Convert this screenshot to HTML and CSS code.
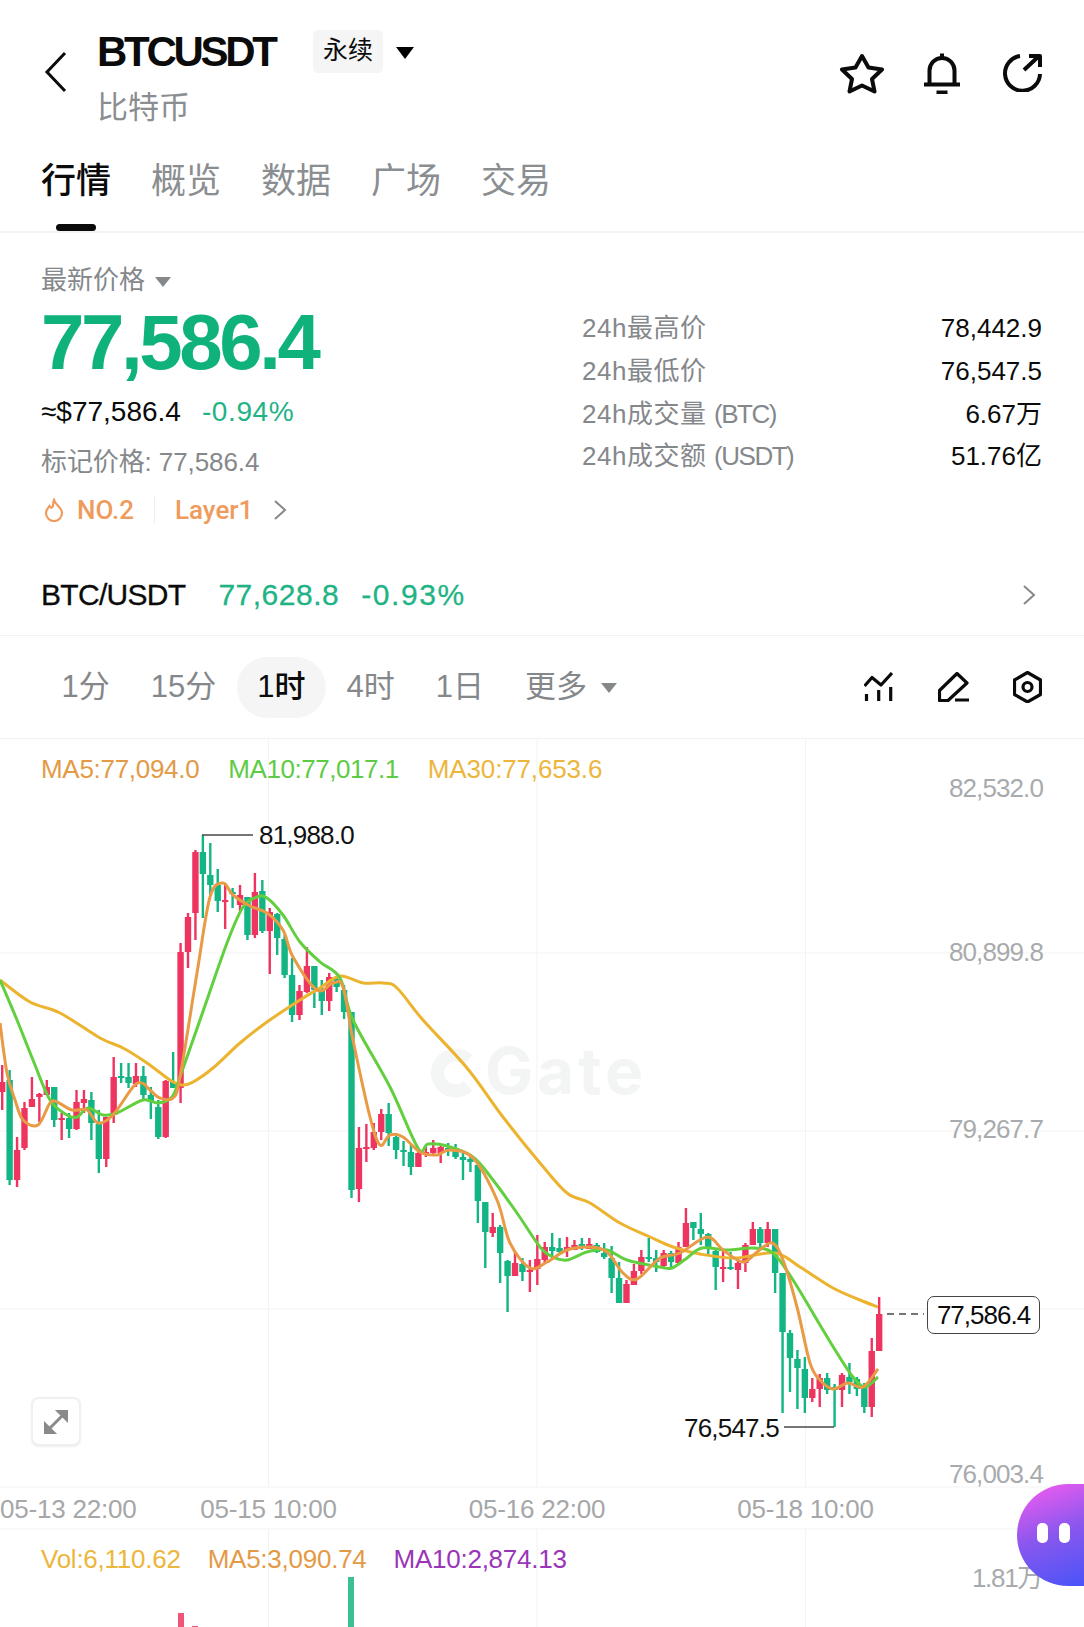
FILE: index.html
```html
<!DOCTYPE html>
<html lang="zh-CN">
<head>
  <meta charset="UTF-8" />
  <meta name="viewport" content="width=device-width, initial-scale=1.0" />
  <title>BTCUSDT</title>
  <link rel="stylesheet" href="styles.css">
</head>
<body>
  <header class="top">
    <svg class="back" width="24" height="42" viewBox="0 0 24 42"><polyline points="21,2 3,21 21,40" /></svg>
    <div class="title-block">
      <div class="title-row">
        <h1 class="symbol">BTCUSDT</h1>
        <span class="tag">永续</span>
        <span class="caret caret-black"></span>
      </div>
      <div class="coin-name">比特币</div>
    </div>
    <div class="top-icons">
      <svg class="icon star" width="46" height="41" viewBox="0 0 46 41"><polygon points="23,3 29.500,14.500 43,16.500 33,26 35.500,38.500 23,32.500 10.500,38.500 13,26 3,16.500 16.500,14.500" /></svg>
      <svg class="icon" width="36" height="41" viewBox="0 0 36 41"><path d="M18 0.500V4M5.500 30V17.500a12.500 12.500 0 0 1 25 0V30M0 31.500H36M12.500 39.500H23.500" /></svg>
      <svg class="icon" width="40" height="39" viewBox="0 0 40 39"><path d="M17 3A17.500 17.500 0 1 0 37 21M21 17L36 3M26 3H37V14" /></svg>
    </div>
  </header>

  <nav class="tabs">
    <a class="tab active">行情</a>
    <a class="tab">概览</a>
    <a class="tab">数据</a>
    <a class="tab">广场</a>
    <a class="tab">交易</a>
  </nav>

  <section class="summary">
    <div class="summary-left">
      <div class="price-label">最新价格<span class="caret caret-grey"></span></div>
      <div class="last-price">77,586.4</div>
      <div class="usd-line"><span class="usd">≈$77,586.4</span><span class="change">-0.94%</span></div>
      <div class="mark-price">标记价格: 77,586.4</div>
      <div class="rank-line">
        <svg class="flame" width="20" height="24" viewBox="0 0 20 24"><path d="M10 2C11 7 18 9 18 15a8 8 0 0 1-16 0C2 12 4 10 5.500 8C6.500 10 8 10 8.500 9C9.500 7 9 4 10 2Z" /></svg>
        <span class="rank">NO.2</span>
        <span class="rank-sep"></span>
        <span class="rank">Layer1</span>
        <svg class="rank-arrow" width="14" height="22" viewBox="0 0 14 22"><polyline points="2,2 12,11 2,20" /></svg>
      </div>
    </div>
    <dl class="stats">
      <div class="stat"><dt>24h最高价</dt><dd>78,442.9</dd></div>
      <div class="stat"><dt>24h最低价</dt><dd>76,547.5</dd></div>
      <div class="stat"><dt>24h成交量 <span class="unit">(BTC)</span></dt><dd>6.67万</dd></div>
      <div class="stat"><dt>24h成交额 <span class="unit">(USDT)</span></dt><dd>51.76亿</dd></div>
    </dl>
  </section>

  <section class="pair">
    <span class="pair-name">BTC/USDT</span>
    <span class="pair-price">77,628.8</span>
    <span class="pair-change">-0.93%</span>
    <svg class="pair-arrow" width="14" height="22" viewBox="0 0 14 22"><polyline points="2,2 12,11 2,20" /></svg>
  </section>

  <section class="timeframes">
    <a class="tf">1分</a>
    <a class="tf">15分</a>
    <a class="tf active">1时</a>
    <a class="tf">4时</a>
    <a class="tf">1日</a>
    <a class="tf">更多<span class="caret caret-grey"></span></a>
    <div class="tool-icons">
      <svg class="tool" width="29" height="30" viewBox="0 0 29 30"><path d="M0.500 14L8 5.500L17 13L28 1M2.500 22V29M14.700 18V29M26.700 15V29" /></svg>
      <svg class="tool pencil" width="32" height="30" viewBox="0 0 32 30"><path d="M19 1.500L29 11L10 28.500H1.500V18.500ZM17 28H31" /></svg>
      <svg class="tool" width="29" height="32" viewBox="0 0 29 32"><path d="M14.500 1.500L27.500 9V23.500L14.500 31L1.500 23.500V9Z" /><circle cx="14.500" cy="16" r="4.500" /></svg>
    </div>
  </section>

  <section class="chart">
    <svg class="plot" width="1084" height="888" viewBox="0 739 1084 888">
      <g class="grid">
        <path d="M0 953H1084M0 1131H1084M0 1309H1084M0 1487H1084M0 1529H1084" />
        <path d="M268.500 739V1487M537 739V1487M805.500 739V1487M268.500 1529V1627M537 1529V1627M805.500 1529V1627" />
      </g>
      <g class="watermark">
        <path d="M468 1060A18 18 0 1 0 468 1086" />
        <text x="485" y="1094">Gate</text>
      </g>
      <g id="candles"></g>
      <g id="ma-lines"></g>
      <g class="marks">
        <path d="M202 835H253M784 1427H834" />
        <path class="dash" d="M887 1314H924" />
      </g>
      <text class="mark-text" x="259" y="844">81,988.0</text>
      <text class="mark-text" x="684" y="1437">76,547.5</text>
      <g class="y-axis">
        <text x="1043" y="797">82,532.0</text>
        <text x="1043" y="961">80,899.8</text>
        <text x="1043" y="1138">79,267.7</text>
        <text x="1043" y="1483">76,003.4</text>
        <text class="vol-max" x="1042" y="1587">1.81万</text>
      </g>
      <g class="x-axis">
        <text x="0" y="1518">05-13 22:00</text>
        <text class="mid" x="268.500" y="1518">05-15 10:00</text>
        <text class="mid" x="537" y="1518">05-16 22:00</text>
        <text class="mid" x="805.500" y="1518">05-18 10:00</text>
      </g>
      <g class="vol-bars">
        <rect class="up" x="178" y="1613" width="6" height="14" />
        <rect class="up" x="192" y="1626" width="6" height="1" />
        <rect class="down" x="348" y="1577" width="6" height="50" />
      </g>
    </svg>

    <div class="legend legend-main">
      <span class="c-ma5">MA5:77,094.0</span>
      <span class="c-ma10">MA10:77,017.1</span>
      <span class="c-ma30">MA30:77,653.6</span>
    </div>
    <div class="legend legend-vol">
      <span class="c-ma30">Vol:6,110.62</span>
      <span class="c-ma5">MA5:3,090.74</span>
      <span class="c-purple">MA10:2,874.13</span>
    </div>

    <div class="last-box">77,586.4</div>
    <button class="expand">
      <svg width="24" height="24" viewBox="0 0 24 24"><path d="M13 0H24V11ZM0 13V24H11ZM18 6L12 12M6 18L12 12" /></svg>
    </button>
    <div class="bubble"><span class="eye"></span><span class="eye"></span></div>
  </section>

  <script src="chart.js"></script>
</body>
</html>
```

FILE: styles.css
```css
* {
  box-sizing: border-box;
}

html, body {
  margin: 0;
  height: 1627px;
  overflow: hidden;
}

body {
  width: 1084px;
  background: #fff;
  color: #0b0b0b;
  font-family: "Liberation Sans", "Noto Sans CJK SC", sans-serif;
}

.caret {
  display: inline-block;
  width: 0;
  height: 0;
  border-left: 8px solid transparent;
  border-right: 8px solid transparent;
}

.caret-black {
  border-left-width: 9px;
  border-right-width: 9px;
  border-top: 12px solid #000;
  margin-left: 13px;
  margin-top: 3px;
}

.caret-grey {
  border-top: 10px solid #85888b;
  margin-left: 10px;
  vertical-align: middle;
}

/* header */
.top {
  display: flex;
  height: 135px;
  padding: 30px 41px 0 44px;
}

.back {
  margin-top: 21px;
  flex: none;
}

.back polyline, .rank-arrow polyline, .pair-arrow polyline {
  fill: none;
  stroke: #0b0b0b;
  stroke-width: 3;
}

.title-block {
  margin-left: 29px;
}

.title-row {
  display: flex;
  align-items: center;
  height: 42px;
}

.symbol {
  margin: 2px 0 0;
  font-size: 42px;
  line-height: 42px;
  letter-spacing: -3.300px;
  font-weight: 700;
  width: 216px;
}

.tag {
  width: 70px;
  height: 43px;
  line-height: 41px;
  text-align: center;
  font-size: 25px;
  background: #f5f5f5;
  border-radius: 5px;
}

.coin-name {
  margin-top: 16px;
  font-size: 31px;
  line-height: 40px;
  color: #8b8e91;
}

.top-icons {
  margin-left: auto;
  display: flex;
  align-items: flex-start;
  gap: 43px;
  padding-top: 23px;
}

.star {
  margin-right: -4px;
}

.icon {
  fill: none;
  stroke: #0b0b0b;
  stroke-width: 4;
  stroke-linejoin: round;
}

/* tabs */
.tabs {
  position: relative;
  display: flex;
  gap: 41px;
  height: 98px;
  padding: 22px 0 0 41px;
  border-bottom: 2px solid #f3f3f3;
}

.tab {
  width: 69px;
  font-size: 35px;
  line-height: 48px;
  white-space: nowrap;
  color: #8b8e91;
}

.tab.active {
  color: #0b0b0b;
  font-weight: 500;
}

.tab.active::after {
  content: "";
  position: absolute;
  left: 56px;
  bottom: 0;
  width: 40px;
  height: 7px;
  border-radius: 4px;
  background: #0b0b0b;
}

/* price summary */
.summary {
  display: flex;
  height: 292px;
  padding-left: 41px;
}

.summary-left {
  flex: none;
  width: 541px;
  padding-top: 32px;
}

.price-label {
  font-size: 26px;
  line-height: 30px;
  color: #85888b;
}

.last-price {
  margin-top: 12px;
  font-size: 78px;
  line-height: 70px;
  font-weight: 700;
  letter-spacing: -3.400px;
  color: #10b27c;
}

.usd-line {
  display: flex;
  gap: 21px;
  margin-top: 18px;
  font-size: 28px;
  line-height: 34px;
}

.change {
  color: #1fb386;
  letter-spacing: 0.600px;
}

.mark-price {
  margin-top: 16px;
  font-size: 26px;
  line-height: 34px;
  letter-spacing: -0.100px;
  color: #85888b;
}

.rank-line {
  display: flex;
  align-items: center;
  height: 30px;
  margin-top: 16px;
  padding-left: 3px;
  color: #ef9b5d;
}

.flame {
  fill: none;
  stroke: #ef9b5d;
  stroke-width: 2.200;
}

.rank {
  font-family: Roboto, "Liberation Sans", sans-serif;
  font-size: 26px;
  font-weight: 500;
  margin-left: 13px;
}

.rank-sep {
  width: 1px;
  height: 26px;
  margin-left: 20px;
  margin-right: 7px;
  background: #f1eeea;
}

.rank-arrow {
  margin-left: 20px;
}

.rank-arrow polyline, .pair-arrow polyline {
  stroke: #85888b;
  stroke-width: 2;
}

.stats {
  flex: 1;
  margin: 0;
  padding: 74px 42px 0 0;
}

.stat {
  display: flex;
  justify-content: space-between;
  height: 42.800px;
  line-height: 42px;
  font-size: 26px;
}

.stat dt {
  color: #85888b;
  letter-spacing: 0.500px;
}

.stat .unit {
  letter-spacing: -1.500px;
}

.stat dd {
  margin: 0;
}

/* pair row */
.pair {
  display: flex;
  align-items: center;
  height: 111px;
  padding: 30px 48px 0 41px;
  border-bottom: 1px solid #f2f2f2;
  font-size: 30px;
  -webkit-text-stroke: 0.300px;
}

.pair-name {
  letter-spacing: -0.700px;
}

.pair-price {
  margin-left: 33px;
  letter-spacing: 0.500px;
  color: #1fb386;
}

.pair-change {
  margin-left: 22px;
  letter-spacing: 1.600px;
  color: #1fb386;
}

.pair-arrow {
  margin-left: auto;
  -webkit-text-stroke: 0;
}

/* timeframes */
.timeframes {
  display: flex;
  align-items: center;
  height: 103px;
  padding: 0 42px 0 41px;
  border-bottom: 1px solid #f2f2f2;
}

.tf {
  height: 61px;
  line-height: 59px;
  padding: 0 20.500px;
  font-size: 31px;
  color: #85888b;
  white-space: nowrap;
}

.tf .caret {
  margin-left: 14px;
}

.tf.active {
  background: #f5f5f5;
  border-radius: 31px;
  color: #0b0b0b;
  font-weight: 500;
}

.tool-icons {
  margin-left: auto;
  display: flex;
  align-items: center;
  gap: 44px;
}

.tool {
  fill: none;
  stroke: #0b0b0b;
  stroke-width: 3.200;
  stroke-linejoin: round;
}

.pencil {
  margin-left: 1px;
  margin-right: -1px;
}

/* chart */
.chart {
  position: relative;
  height: 888px;
}

.plot {
  position: absolute;
  left: 0;
  top: 0;
}

.grid path {
  fill: none;
  stroke: #f3f3f3;
  stroke-width: 1;
}

.watermark path {
  fill: none;
  stroke: #f4f5f5;
  stroke-width: 13;
}

.watermark text {
  font-size: 64px;
  font-weight: 700;
  letter-spacing: 4px;
  fill: #f3f4f4;
  font-family: Inter, "Liberation Sans", sans-serif;
}

.marks path {
  fill: none;
  stroke: #4a4a4a;
  stroke-width: 1.500;
}

.marks .dash {
  stroke-dasharray: 7 5;
}

.mark-text {
  font-size: 26px;
  letter-spacing: -0.800px;
  fill: #111;
}

.y-axis text {
  font-size: 26px;
  letter-spacing: -0.900px;
  fill: #a8abad;
  text-anchor: end;
}

.y-axis .vol-max {
  letter-spacing: -1.300px;
}

.x-axis text {
  font-size: 26px;
  letter-spacing: -0.200px;
  fill: #a5a7a9;
}

.x-axis .mid {
  text-anchor: middle;
}

.vol-bars .up {
  fill: #ee5577;
}

.vol-bars .down {
  fill: #3cbf94;
}

.legend {
  position: relative;
  display: flex;
  font-size: 26px;
  line-height: 30px;
  letter-spacing: -0.300px;
  padding-left: 41px;
}

.legend-main {
  gap: 29px;
  padding-top: 15px;
}

.legend-main .c-ma10 {
  letter-spacing: -0.450px;
}

.legend-main .c-ma30 {
  letter-spacing: -0.150px;
}

.legend-vol {
  gap: 27px;
  margin-top: 760px;
  letter-spacing: -0.250px;
}

.c-ma5 {
  color: #e39a46;
}

.c-ma10 {
  color: #5dcc44;
}

.c-ma30 {
  color: #ecb63c;
}

.c-purple {
  color: #9a35b8;
}

.last-box {
  position: absolute;
  left: 927px;
  top: 557px;
  width: 113px;
  height: 38px;
  line-height: 36px;
  text-align: center;
  font-size: 26px;
  letter-spacing: -1px;
  border: 1.500px solid #444;
  border-radius: 7px;
  background: #fff;
}

.expand {
  position: absolute;
  left: 31px;
  top: 658px;
  width: 50px;
  height: 49px;
  padding: 0;
  display: flex;
  align-items: center;
  justify-content: center;
  background: #fff;
  border: 2px solid #f0f0f0;
  border-radius: 8px;
  box-shadow: 0 1px 2px #eee;
}

.expand path {
  fill: #8a8a8a;
  stroke: #8a8a8a;
  stroke-width: 3;
}

.bubble {
  position: absolute;
  right: 0;
  top: 745px;
  width: 67px;
  height: 102px;
  padding: 39px 0 0 20px;
  display: flex;
  gap: 11px;
  border-radius: 51px 0 0 51px;
  background: linear-gradient(160deg, #fb5cf0 0%, #8a57ee 50%, #4a54f8 100%);
}

.eye {
  width: 11px;
  height: 20px;
  border-radius: 5px;
  background: #fff;
}
```

FILE: chart.js
```js
// wick top, body top, body bottom, wick bottom, colour (page px)
const candles = [
  [1065,1082,1092,1110,'r'],[1070,1080,1180,1185,'g'],[1137,1150,1180,1187,'r'],[1102,1108,1148,1150,'r'],
  [1077,1099,1107,1107,'r'],[1093,1094,1097,1122,'r'],[1080,1087,1095,1095,'r'],[1087,1087,1120,1127,'g'],
  [1113,1118,1120,1140,'r'],[1113,1118,1129,1138,'g'],[1090,1102,1129,1130,'r'],[1090,1099,1103,1113,'r'],
  [1092,1100,1123,1140,'g'],[1110,1124,1159,1173,'g'],[1117,1117,1159,1167,'r'],[1057,1077,1115,1123,'r'],
  [1063,1076,1078,1083,'g'],[1063,1077,1083,1088,'g'],[1063,1076,1084,1087,'r'],[1066,1076,1095,1100,'g'],
  [1087,1095,1102,1119,'g'],[1100,1107,1137,1139,'g'],[1080,1081,1137,1138,'r'],[1052,1082,1088,1088,'g'],
  [943,952,1088,1103,'r'],[913,917,952,968,'r'],[850,852,913,940,'r'],[835,852,874,918,'g'],
  [843,875,885,895,'g'],[869,885,901,912,'g'],[883,900,902,929,'r'],[888,892,894,908,'g'],
  [885,895,905,911,'r'],[897,897,935,940,'g'],[873,892,935,938,'r'],[880,891,931,933,'g'],
  [908,912,931,974,'r'],[913,914,938,955,'g'],[935,939,975,978,'g'],[958,975,1015,1022,'g'],
  [985,991,1015,1020,'r'],[947,966,992,993,'r'],[966,966,990,1008,'g'],[980,990,1001,1015,'g'],
  [973,977,1001,1011,'r'],[977,979,987,992,'g'],[985,990,1012,1019,'g'],[1012,1012,1190,1198,'g'],
  [1127,1148,1189,1202,'r'],[1124,1147,1149,1162,'r'],[1123,1132,1148,1150,'r'],[1109,1114,1132,1140,'r'],
  [1103,1114,1133,1146,'g'],[1133,1137,1150,1159,'g'],[1141,1150,1152,1166,'g'],[1145,1152,1167,1175,'g'],
  [1152,1153,1167,1167,'r'],[1147,1152,1154,1157,'r'],[1140,1148,1153,1154,'r'],[1145,1147,1153,1163,'r'],
  [1143,1148,1151,1156,'g'],[1144,1148,1157,1159,'g'],[1151,1157,1160,1180,'g'],[1157,1159,1162,1172,'g'],
  [1162,1165,1201,1223,'g'],[1202,1202,1232,1268,'g'],[1213,1227,1233,1237,'r'],[1225,1227,1253,1283,'g'],
  [1260,1261,1276,1312,'g'],[1252,1263,1276,1276,'r'],[1258,1264,1272,1281,'g'],[1260,1270,1271,1292,'r'],
  [1235,1259,1269,1285,'r'],[1242,1247,1260,1263,'r'],[1233,1247,1251,1258,'g'],[1238,1248,1252,1253,'g'],
  [1237,1247,1250,1257,'r'],[1240,1245,1250,1250,'r'],[1238,1244,1247,1250,'g'],[1238,1244,1249,1249,'r'],
  [1243,1245,1252,1253,'g'],[1243,1253,1257,1259,'g'],[1246,1258,1278,1293,'g'],[1262,1278,1303,1303,'g'],
  [1280,1284,1303,1303,'r'],[1264,1271,1285,1285,'r'],[1250,1257,1271,1274,'r'],[1238,1257,1259,1262,'g'],
  [1250,1258,1262,1272,'g'],[1250,1253,1266,1267,'r'],[1251,1253,1262,1267,'g'],[1242,1247,1263,1264,'r'],
  [1208,1223,1247,1247,'r'],[1222,1222,1228,1240,'g'],[1213,1229,1234,1245,'g'],[1233,1234,1249,1255,'g'],
  [1250,1251,1267,1290,'g'],[1250,1267,1268,1282,'r'],[1252,1267,1269,1270,'g'],[1257,1263,1270,1289,'r'],
  [1243,1245,1263,1272,'r'],[1222,1229,1245,1245,'r'],[1227,1229,1243,1247,'g'],[1222,1229,1243,1247,'r'],
  [1229,1229,1273,1293,'g'],[1273,1273,1332,1413,'g'],[1330,1333,1358,1392,'g'],[1350,1359,1368,1409,'g'],
  [1357,1369,1398,1413,'g'],[1378,1389,1398,1402,'r'],[1374,1378,1389,1407,'r'],[1373,1378,1390,1394,'g'],
  [1384,1387,1390,1427,'g'],[1373,1375,1390,1407,'r'],[1363,1377,1382,1394,'g'],[1377,1379,1389,1396,'g'],
  [1383,1388,1407,1413,'g'],[1338,1351,1407,1417,'r'],[1297,1314,1351,1351,'r']
];

const ma30 = [[0,980],[30,1002],[60,1013],[100,1038],[123,1048],[147,1063],[170,1080],[182,1085],[193,1082],
  [213,1068],[240,1043],[267,1022],[300,1000],[320,988],[340,976],[363,983],[383,983],[397,988],[423,1020],
  [467,1068],[503,1117],[540,1163],[567,1193],[590,1203],[620,1223],[650,1237],[673,1247],[700,1254],
  [735,1258],[775,1253],[800,1267],[833,1288],[860,1300],[878,1307]];

const ma10 = [[0,980],[17,1020],[33,1060],[50,1100],[67,1115],[77,1117],[88,1108],[103,1115],[117,1113],
  [143,1100],[158,1103],[172,1097],[180,1077],[200,1020],[227,943],[243,907],[257,897],[267,898],[283,915],
  [300,942],[320,962],[340,978],[353,1020],[390,1087],[418,1148],[428,1144],[447,1146],[473,1157],[493,1180],
  [517,1213],[540,1247],[553,1257],[567,1260],[587,1252],[607,1250],[627,1260],[660,1267],[672,1268],[687,1258],
  [702,1248],[727,1250],[753,1248],[773,1253],[793,1280],[817,1320],[837,1353],[853,1377],[865,1387],[878,1377]];

const ma5 = [[0,1023],[7,1073],[15,1100],[23,1120],[38,1125],[50,1103],[57,1102],[72,1110],[87,1110],[98,1123],
  [113,1115],[133,1087],[142,1083],[150,1090],[160,1098],[173,1098],[180,1077],[197,973],[210,897],[223,883],
  [233,895],[250,906],[267,913],[283,930],[293,957],[317,990],[333,983],[343,987],[353,1040],[370,1117],
  [380,1145],[390,1135],[403,1137],[420,1152],[437,1155],[450,1150],[473,1158],[497,1200],[510,1243],[530,1268],
  [547,1262],[567,1250],[590,1247],[607,1252],[623,1273],[637,1279],[660,1258],[680,1253],[707,1237],[723,1250],
  [743,1262],[757,1252],[772,1243],[783,1260],[797,1307],[810,1363],[820,1380],[833,1389],[848,1383],[863,1387],[878,1369]];

const COLORS = { r: '#ee3560', g: '#12b583' };

function drawCandles() {
  let out = '';
  candles.forEach((c, i) => {
    const x = 2 + i * 7.432;
    const fill = COLORS[c[4]];
    out += `<rect x="${x - 1}" y="${c[0]}" width="2.400" height="${c[3] - c[0]}" fill="${fill}"/>`;
    out += `<rect x="${x - 3}" y="${c[1]}" width="6.400" height="${Math.max(c[2] - c[1], 2)}" fill="${fill}"/>`;
  });
  document.getElementById('candles').innerHTML = out;
}

function smoothPath(pts) {
  let d = `M${pts[0][0]} ${pts[0][1]}`;
  for (let i = 0; i < pts.length - 1; i++) {
    const p0 = pts[i - 1] || pts[i];
    const p1 = pts[i];
    const p2 = pts[i + 1];
    const p3 = pts[i + 2] || p2;
    const c1x = p1[0] + (p2[0] - p0[0]) / 6;
    const c1y = p1[1] + (p2[1] - p0[1]) / 6;
    const c2x = p2[0] - (p3[0] - p1[0]) / 6;
    const c2y = p2[1] - (p3[1] - p1[1]) / 6;
    d += `C${c1x} ${c1y} ${c2x} ${c2y} ${p2[0]} ${p2[1]}`;
  }
  return d;
}

function drawLines() {
  const lines = [[ma30, '#ecb32e'], [ma10, '#62cf3f'], [ma5, '#e99a45']];
  document.getElementById('ma-lines').innerHTML = lines
    .map(l => `<path d="${smoothPath(l[0])}" fill="none" stroke="${l[1]}" stroke-width="3"/>`)
    .join('');
}

drawCandles();
drawLines();
```
